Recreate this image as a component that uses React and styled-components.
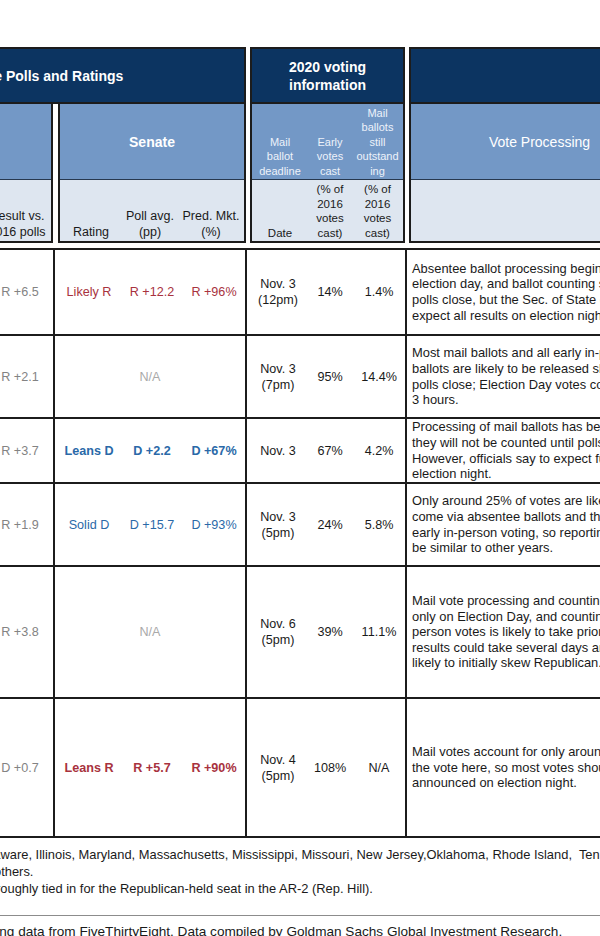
import React from 'react';
import styled, { createGlobalStyle } from 'styled-components';

const NAVY = '#0c3461';
const MID = '#7398c6';
const LIGHT = '#dee6f0';
const LINE = '#1c1c1c';

const GlobalStyle = createGlobalStyle`
  html, body { margin: 0; padding: 0; background: #fff; }
  body { font-family: "Liberation Sans", Arial, sans-serif; color: #1a1a1a; }
`;

const Page = styled.div`
  width: 600px;
  height: 936px;
  overflow: hidden;
  background: #fff;
`;

// the exhibit is wider than the window, so it is cropped on both sides
const Sheet = styled.div`
  width: 824px;
  margin-left: -154px;
  padding-top: 47px;
`;

const HeaderRow = styled.div`
  display: flex;
  gap: 4px;
`;

const Group = styled.div`
  width: ${p => p.$w}px;
  flex: none;
  display: flex;
  flex-direction: column;
`;

const TitleBar = styled.div`
  height: 57px;
  box-sizing: border-box;
  border: 2px solid ${LINE};
  background: ${NAVY};
  color: #fff;
  font-weight: bold;
  font-size: 14px;
  line-height: 18px;
  display: flex;
  align-items: center;
  justify-content: center;
  text-align: center;
  white-space: nowrap;
`;

const SubRow = styled.div`
  display: flex;
  gap: 5px;
`;

const SubBox = styled.div`
  box-sizing: border-box;
  width: ${p => (p.$w ? `${p.$w}px` : 'auto')};
  flex: ${p => (p.$w ? 'none' : 1)};
  border: 2px solid ${LINE};
  border-top: none;
`;

const MidBand = styled.div`
  height: 75px;
  background: ${MID};
  border-bottom: 1px solid #27384f;
  display: flex;
  align-items: ${p => (p.$center ? 'center' : 'flex-end')};
  justify-content: center;
`;

const LightBand = styled.div`
  height: 61px;
  background: ${LIGHT};
  display: flex;
  align-items: flex-end;
`;

const BandTitle = styled.div`
  color: #fff;
  font-size: 14px;
  font-weight: ${p => (p.$bold ? 'bold' : 'normal')};
`;

const MidLabel = styled.div`
  width: ${p => p.$w}px;
  flex: none;
  text-align: center;
  font-size: 11px;
  line-height: 14.5px;
  color: #edf2fa;
  padding-bottom: 1px;
`;

const LightLabel = styled.div`
  width: ${p => p.$w}px;
  flex: none;
  text-align: center;
  font-size: ${p => (p.$small ? '11.5px' : '12.5px')};
  line-height: ${p => (p.$small ? '14.5px' : '15.5px')};
  color: #1a1a1a;
  padding-bottom: 1px;
`;

const Grid = styled.table`
  margin-top: 5px;
  width: 824px;
  table-layout: fixed;
  border-collapse: collapse;
`;

const Row = styled.tr`
  height: ${p => p.$h}px;
`;

const Cell = styled.td`
  border: 2px solid ${LINE};
  padding: 0;
  vertical-align: middle;
  text-align: center;
  font-size: 12.6px;
  line-height: 16px;
  color: ${p => p.$color || '#1a1a1a'};
`;

const Split = styled.div`
  display: flex;
  align-items: center;
`;

const Part = styled.div`
  width: ${p => p.$w}px;
  flex: none;
  text-align: center;
  font-weight: ${p => (p.$bold ? 'bold' : 'normal')};
  color: ${p => p.$color || 'inherit'};
`;

const ProcessCell = styled.td`
  border: 2px solid ${LINE};
  padding: 0 5px;
  vertical-align: middle;
  text-align: left;
  font-size: 12.9px;
  line-height: 15.6px;
  color: #1a1a1a;
  white-space: nowrap;
  overflow: hidden;
`;

const Line = styled.span`
  display: block;
`;

const Notes = styled.div`
  margin-top: 8px;
  font-size: 12.9px;
  line-height: 17px;
  color: #1a1a1a;
  white-space: pre;
`;

const Note = styled.div`
  margin-left: ${p => p.$shift}px;
`;

const Rule = styled.hr`
  margin: 18px 0 0;
  border: none;
  border-top: 1px solid #8c8c8c;
`;

const Source = styled.div`
  margin: 8px 0 0 -77px;
  font-size: 13.6px;
  line-height: 16px;
  white-space: nowrap;
  color: #1a1a1a;
`;

const RED = '#a8323e';
const BLUE = '#2a69a8';

const SENATE_W = [68, 58, 66];
const VOTE_W = [62, 42, 56];

const rows = [
  {
    h: 86,
    result: 'R +6.5',
    senate: { color: RED, bold: false, vals: ['Likely R', 'R +12.2', 'R +96%'] },
    deadline: ['Nov. 3', '(12pm)'],
    early: '14%',
    left: '1.4%',
    notes: [
      'Absentee ballot processing begins before',
      'election day, and ballot counting starts once',
      'polls close, but the Sec. of State does not',
      'expect all results on election night.',
    ],
  },
  {
    h: 83,
    result: 'R +2.1',
    senate: null,
    deadline: ['Nov. 3', '(7pm)'],
    early: '95%',
    left: '14.4%',
    notes: [
      'Most mail ballots and all early in-person',
      'ballots are likely to be released shortly after',
      'polls close; Election Day votes could take 2-',
      '3 hours.',
    ],
  },
  {
    h: 65,
    result: 'R +3.7',
    senate: { color: BLUE, bold: true, vals: ['Leans D', 'D +2.2', 'D +67%'] },
    deadline: ['Nov. 3'],
    early: '67%',
    left: '4.2%',
    notes: [
      'Processing of mail ballots has begun, but',
      'they will not be counted until polls close.',
      'However, officials say to expect full results on',
      'election night.',
    ],
  },
  {
    h: 83,
    result: 'R +1.9',
    senate: { color: BLUE, bold: false, vals: ['Solid D', 'D +15.7', 'D +93%'] },
    deadline: ['Nov. 3', '(5pm)'],
    early: '24%',
    left: '5.8%',
    notes: [
      'Only around 25% of votes are likely to',
      'come via absentee ballots and there is no',
      'early in-person voting, so reporting should',
      'be similar to other years.',
    ],
  },
  {
    h: 132,
    result: 'R +3.8',
    senate: null,
    deadline: ['Nov. 6', '(5pm)'],
    early: '39%',
    left: '11.1%',
    notes: [
      'Mail vote processing and counting can begin',
      'only on Election Day, and counting of in-',
      'person votes is likely to take priority. Full',
      'results could take several days and are',
      'likely to initially skew Republican.',
    ],
  },
  {
    h: 139,
    result: 'D +0.7',
    senate: { color: RED, bold: true, vals: ['Leans R', 'R +5.7', 'R +90%'] },
    deadline: ['Nov. 4', '(5pm)'],
    early: '108%',
    left: 'N/A',
    notes: [
      'Mail votes account for only around 10% of',
      'the vote here, so most votes should be',
      'announced on election night.',
    ],
  },
];

const Lines = ({ items }) => items.map(t => <Line key={t}>{t}</Line>);

const Header = () => (
  <HeaderRow>
    <Group $w={400}>
      <TitleBar>Race Polls and Ratings</TitleBar>
      <SubRow>
        <SubBox $w={134}>
          <MidBand />
          <LightBand />
        </SubBox>
        <SubBox $w={68}>
          <MidBand />
          <LightBand>
            <LightLabel $w={60}>
              <Lines items={['Result vs.', '2016 polls']} />
            </LightLabel>
          </LightBand>
        </SubBox>
        <SubBox $w={188}>
          <MidBand $center>
            <BandTitle $bold>Senate</BandTitle>
          </MidBand>
          <LightBand>
            <LightLabel $w={62}>Rating</LightLabel>
            <LightLabel $w={56}>
              <Lines items={['Poll avg.', '(pp)']} />
            </LightLabel>
            <LightLabel $w={66}>
              <Lines items={['Pred. Mkt.', '(%)']} />
            </LightLabel>
          </LightBand>
        </SubBox>
      </SubRow>
    </Group>

    <Group $w={155}>
      <TitleBar>
        <div>
          2020 voting
          <br />
          information
        </div>
      </TitleBar>
      <SubBox>
        <MidBand>
          <MidLabel $w={56}>
            <Lines items={['Mail', 'ballot', 'deadline']} />
          </MidLabel>
          <MidLabel $w={44}>
            <Lines items={['Early', 'votes', 'cast']} />
          </MidLabel>
          <MidLabel $w={51}>
            <Lines items={['Mail', 'ballots', 'still', 'outstand', 'ing']} />
          </MidLabel>
        </MidBand>
        <LightBand>
          <LightLabel $w={56} $small>Date</LightLabel>
          <LightLabel $w={44} $small>
            <Lines items={['(% of', '2016', 'votes', 'cast)']} />
          </LightLabel>
          <LightLabel $w={51} $small>
            <Lines items={['(% of', '2016', 'votes', 'cast)']} />
          </LightLabel>
        </LightBand>
      </SubBox>
    </Group>

    <Group $w={261}>
      <TitleBar />
      <SubBox>
        <MidBand $center>
          <BandTitle>Vote Processing</BandTitle>
        </MidBand>
        <LightBand />
      </SubBox>
    </Group>
  </HeaderRow>
);

const Body = () => (
  <Grid>
    <colgroup>
      <col style={{ width: 139 }} />
      <col style={{ width: 68 }} />
      <col style={{ width: 192 }} />
      <col style={{ width: 160 }} />
      <col style={{ width: 265 }} />
    </colgroup>
    <tbody>
      {rows.map((r, i) => (
        <Row key={i} $h={r.h}>
          <Cell />
          <Cell $color="#838383">{r.result}</Cell>
          <Cell $color="#a9a9a9">
            {r.senate ? (
              <Split>
                {r.senate.vals.map((v, j) => (
                  <Part key={v} $w={SENATE_W[j]} $bold={r.senate.bold} $color={r.senate.color}>
                    {v}
                  </Part>
                ))}
              </Split>
            ) : (
              'N/A'
            )}
          </Cell>
          <Cell>
            <Split>
              <Part $w={VOTE_W[0]}>
                <Lines items={r.deadline} />
              </Part>
              <Part $w={VOTE_W[1]}>{r.early}</Part>
              <Part $w={VOTE_W[2]}>{r.left}</Part>
            </Split>
          </Cell>
          <ProcessCell>
            <Lines items={r.notes} />
          </ProcessCell>
        </Row>
      ))}
    </tbody>
  </Grid>
);

const App = () => (
  <Page>
    <GlobalStyle />
    <Sheet>
      <Header />
      <Body />
    </Sheet>
    <Notes>
      <Note $shift={-26}>
        {'Delaware, Illinois, Maryland, Massachusetts, Mississippi, Missouri, New Jersey,Oklahoma, Rhode Island,  Tennessee, Vermont and'}
      </Note>
      <Note $shift={-6}>others.</Note>
      <Note $shift={-4}>roughly tied in for the Republican-held seat in the AR-2 (Rep. Hill).</Note>
    </Notes>
    <Rule />
    <Source>
      Source: Polling data from FiveThirtyEight. Data compiled by Goldman Sachs Global Investment Research.
    </Source>
  </Page>
);

export default App;
